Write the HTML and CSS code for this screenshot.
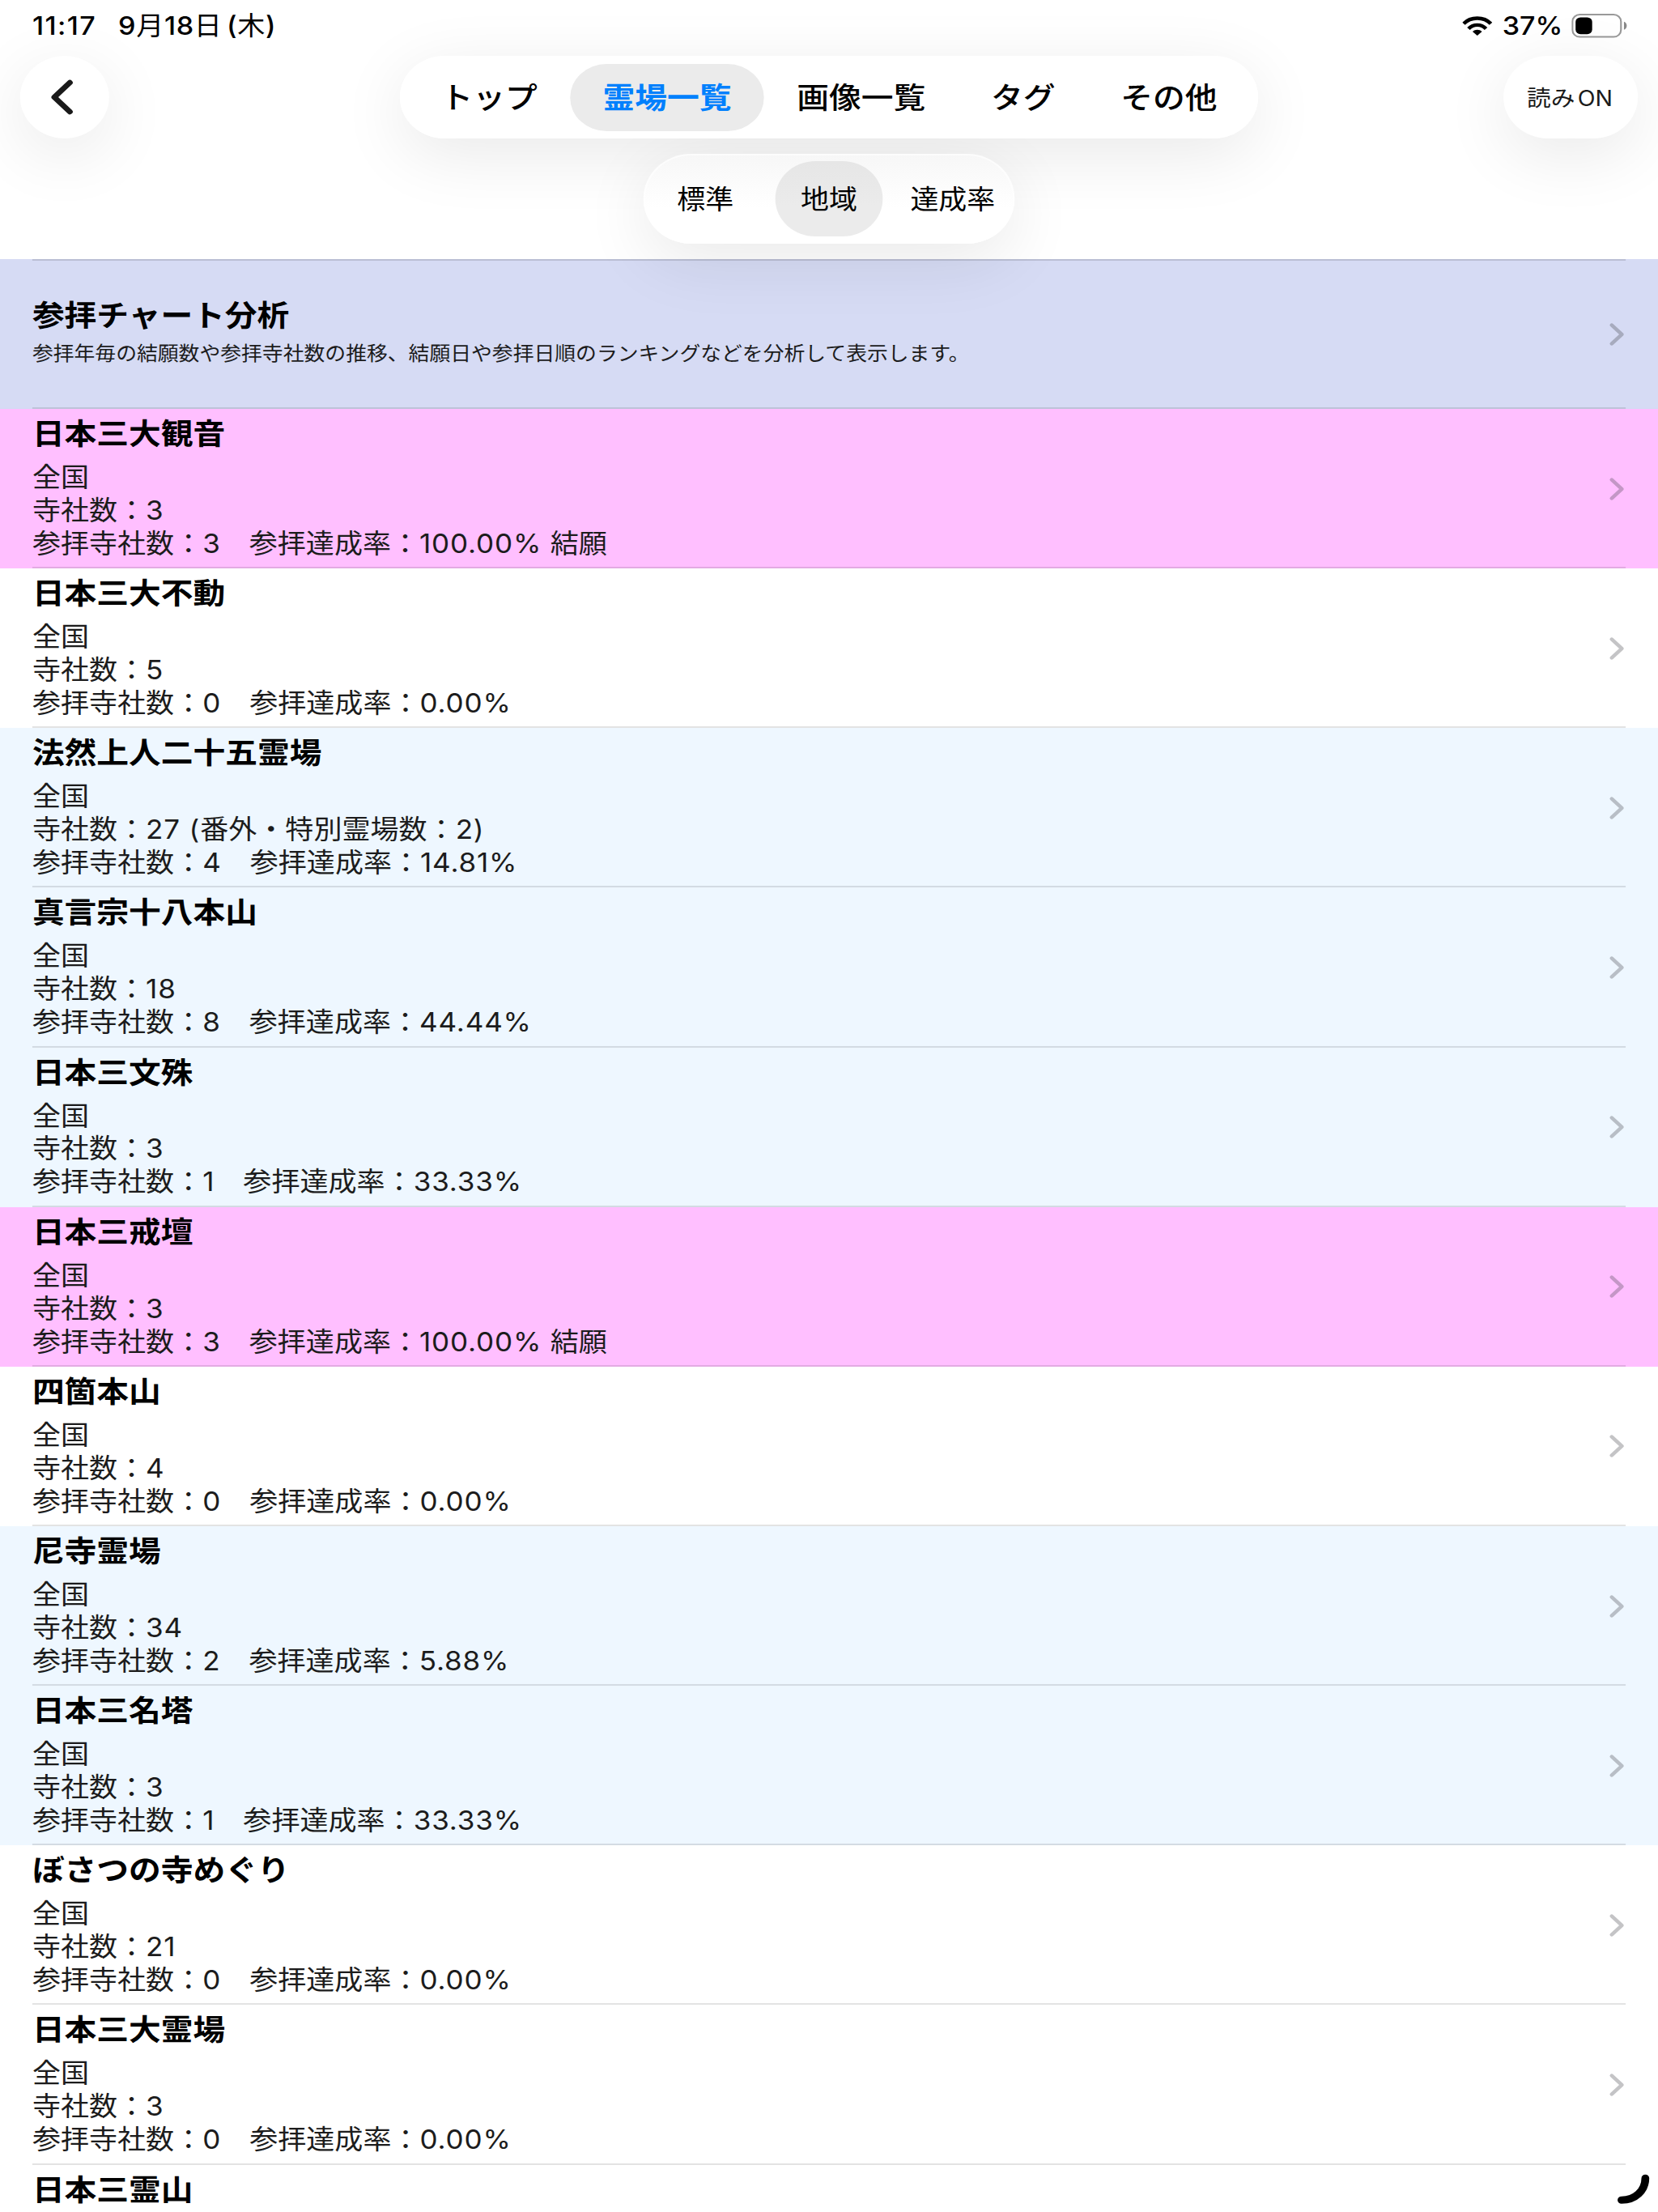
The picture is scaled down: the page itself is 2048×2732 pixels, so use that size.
FILE: index.html
```html
<!DOCTYPE html>
<html lang="ja">
<head>
<meta charset="utf-8">
<title>霊場一覧</title>
<link rel="stylesheet" href="styles.css">
</head>
<body>
<svg class="defs" width="0" height="0" aria-hidden="true">
  <symbol id="chevron" viewBox="0 0 18 30"><path d="M3 3.5 L14.6 15 L3 26.5" fill="none" stroke="currentColor" stroke-width="4.4" stroke-linecap="round" stroke-linejoin="round"/></symbol>
</svg>
<div class="screen">
  <header class="header">
    <div class="status">
      <div class="status-left"><span class="time">11:17</span><span class="date">9<span class="kanji">月</span>18<span class="kanji">日</span><span class="weekday">(<span class="kanji">木</span>)</span></span></div>
      <div class="status-right">
        <svg class="wifi" viewBox="0 0 34 24" width="34" height="24"><g fill="none" stroke="#000" stroke-width="4.4"><path d="M1.4 9.2 C9.5 .2 24.5 .2 32.6 9.2"/><path d="M7 15.4 C12.5 9.4 21.5 9.4 27 15.4"/></g><path d="M11.6 19 C14.6 16 19.4 16 22.4 19 L17 24 Z"/></svg>
        <span class="percent">37%</span>
        <svg class="battery" viewBox="0 0 64 30" width="64" height="30"><rect x="1" y="1" width="55.6" height="27.6" rx="8.5" fill="none" stroke="#999" stroke-width="2"/><rect x="4.6" y="4.4" width="19" height="20.8" rx="5.6"/><path d="M60 9.8 C64.3 11.4 64.3 18.2 60 19.8 Z" fill="#888"/></svg>
      </div>
    </div>
    <div class="toolbar">
      <button class="round-button back" aria-label="戻る"><svg viewBox="0 0 26 44" width="26" height="44"><path d="M22 4 L4.2 22 L22 40" fill="none" stroke="#1a1a1a" stroke-width="6.6" stroke-linecap="round" stroke-linejoin="round"/></svg></button>
      <nav class="tabs">
        <div class="tabs-face">
          <a class="tab">トップ</a><a class="tab active">霊場一覧</a><a class="tab">画像一覧</a><a class="tab">タグ</a><a class="tab">その他</a>
        </div>
      </nav>
      <button class="round-button reading">読み<span class="latin">ON</span></button>
    </div>
    <div class="segment">
      <span class="choice">標準</span><span class="choice selected">地域</span><span class="choice">達成率</span>
    </div>
  </header>
  <main class="list">
    <section class="row chart">
      <div class="text"><h2>参拝チャート分析</h2><p>参拝年毎の結願数や参拝寺社数の推移、結願日や参拝日順のランキングなどを分析して表示します。</p></div>
      <svg class="chevron"><use href="#chevron"/></svg>
    </section>
    <section class="row done">
      <div class="text"><h2>日本三大観音</h2><p>全国</p><p>寺社数：<span class="num">3</span></p><p>参拝寺社数：<span class="num">3</span>　参拝達成率：<span class="num">100.00% </span>結願</p></div>
      <svg class="chevron"><use href="#chevron"/></svg>
    </section>
    <section class="row">
      <div class="text"><h2>日本三大不動</h2><p>全国</p><p>寺社数：<span class="num">5</span></p><p>参拝寺社数：<span class="num">0</span>　参拝達成率：<span class="num">0.00%</span></p></div>
      <svg class="chevron"><use href="#chevron"/></svg>
    </section>
    <section class="row partial">
      <div class="text"><h2>法然上人二十五霊場</h2><p>全国</p><p>寺社数：<span class="num">27 (</span>番外・特別霊場数：<span class="num">2)</span></p><p>参拝寺社数：<span class="num">4</span>　参拝達成率：<span class="num">14.81%</span></p></div>
      <svg class="chevron"><use href="#chevron"/></svg>
    </section>
    <section class="row partial">
      <div class="text"><h2>真言宗十八本山</h2><p>全国</p><p>寺社数：<span class="num">18</span></p><p>参拝寺社数：<span class="num">8</span>　参拝達成率：<span class="num">44.44%</span></p></div>
      <svg class="chevron"><use href="#chevron"/></svg>
    </section>
    <section class="row partial">
      <div class="text"><h2>日本三文殊</h2><p>全国</p><p>寺社数：<span class="num">3</span></p><p>参拝寺社数：<span class="num">1</span>　参拝達成率：<span class="num">33.33%</span></p></div>
      <svg class="chevron"><use href="#chevron"/></svg>
    </section>
    <section class="row done">
      <div class="text"><h2>日本三戒壇</h2><p>全国</p><p>寺社数：<span class="num">3</span></p><p>参拝寺社数：<span class="num">3</span>　参拝達成率：<span class="num">100.00% </span>結願</p></div>
      <svg class="chevron"><use href="#chevron"/></svg>
    </section>
    <section class="row">
      <div class="text"><h2>四箇本山</h2><p>全国</p><p>寺社数：<span class="num">4</span></p><p>参拝寺社数：<span class="num">0</span>　参拝達成率：<span class="num">0.00%</span></p></div>
      <svg class="chevron"><use href="#chevron"/></svg>
    </section>
    <section class="row partial">
      <div class="text"><h2>尼寺霊場</h2><p>全国</p><p>寺社数：<span class="num">34</span></p><p>参拝寺社数：<span class="num">2</span>　参拝達成率：<span class="num">5.88%</span></p></div>
      <svg class="chevron"><use href="#chevron"/></svg>
    </section>
    <section class="row partial">
      <div class="text"><h2>日本三名塔</h2><p>全国</p><p>寺社数：<span class="num">3</span></p><p>参拝寺社数：<span class="num">1</span>　参拝達成率：<span class="num">33.33%</span></p></div>
      <svg class="chevron"><use href="#chevron"/></svg>
    </section>
    <section class="row">
      <div class="text"><h2>ぼさつの寺めぐり</h2><p>全国</p><p>寺社数：<span class="num">21</span></p><p>参拝寺社数：<span class="num">0</span>　参拝達成率：<span class="num">0.00%</span></p></div>
      <svg class="chevron"><use href="#chevron"/></svg>
    </section>
    <section class="row">
      <div class="text"><h2>日本三大霊場</h2><p>全国</p><p>寺社数：<span class="num">3</span></p><p>参拝寺社数：<span class="num">0</span>　参拝達成率：<span class="num">0.00%</span></p></div>
      <svg class="chevron"><use href="#chevron"/></svg>
    </section>
    <section class="row">
      <div class="text"><h2>日本三霊山</h2></div>
    </section>
  </main>
  <svg class="corner" viewBox="0 0 38 38" width="38" height="38"><path d="M32.5 5.3 C32.5 20.5 21 32.3 5.2 32.3" fill="none" stroke="#000" stroke-width="9" stroke-linecap="round"/></svg>
</div>
</body>
</html>
```
FILE: styles.css
```css
* { box-sizing: border-box; margin: 0; padding: 0; }

body {
  width: 2048px;
  height: 2732px;
  overflow: hidden;
  background: #fff;
}

.defs { display: block; }

/* The tablet's canvas is a little narrower than the window and is widened to fill it. */
.screen {
  position: relative;
  width: 1899px;
  height: 2732px;
  overflow: hidden;
  transform: scaleX(1.07846);
  transform-origin: 0 0;
  background: #fff;
  color: #000;
  font-family: Inter, "Noto Sans CJK JP", sans-serif;
}

.header {
  position: relative;
  z-index: 1;
  height: 320px;
}

.status {
  display: flex;
  justify-content: space-between;
  height: 69px;
  padding: 0 35px 0 37px;
  font-size: 31.6px;
  font-weight: 500;
  line-height: 64px;
}

.status-left, .status-right { display: flex; height: 64px; align-items: center; }
.time { letter-spacing: 1.3px; }
.date { margin-left: 25px; letter-spacing: .6px; }
.kanji { font-weight: 400; }
.weekday { margin-left: 5px; }
.percent { margin: 0 10px 0 12px; }

.toolbar {
  display: flex;
  justify-content: space-between;
  height: 102px;
  padding: 0 23px;
}

.round-button {
  display: flex;
  align-items: center;
  justify-content: center;
  border: 0;
  border-radius: 51px;
  background: #fff;
  box-shadow: 0 19px 80px rgba(0, 0, 0, .09);
  color: #1a1a1a;
  font: 400 27.6px/42px Inter, "Noto Sans CJK JP", sans-serif;
}

.back { width: 102px; padding-right: 7px; }
.reading { width: 154px; padding: 1px 2px 0 0; }
.latin { margin-left: 3px; font-size: 26.4px; }

.tabs {
  position: relative;
  margin-left: 52px;
}

.tabs::before {
  content: "";
  position: absolute;
  inset: 0;
  border-radius: 51px;
  box-shadow: 0 19px 80px rgba(0, 0, 0, .09);
}

.tabs-face {
  position: relative;
  z-index: 2;
  display: flex;
  height: 102px;
  padding: 9.5px 9px;
  border-radius: 51px;
  background: #fff;
}

.tab {
  padding: 0 37.4px;
  border-radius: 42px;
  font-size: 36.9px;
  font-weight: 500;
  line-height: 84px;
  height: 83px;
  white-space: nowrap;
}

.tab.active {
  background: #ebebeb;
  color: #0080fd;
  font-weight: 700;
}

.segment {
  position: relative;
  z-index: 1;
  display: grid;
  grid-template-columns: repeat(3, 1fr);
  width: 425px;
  height: 111px;
  margin: 19px auto 0;
  padding: 9px 0;
  border-radius: 55px;
  background: linear-gradient(#f7f7f7, #fff 60%);
  box-shadow: 0 19px 80px rgba(0, 0, 0, .09), inset 0 0 0 2px rgba(255, 255, 255, .6);
}

.choice {
  height: 93px;
  margin: 0 9px;
  border-radius: 46px;
  font-size: 32.4px;
  line-height: 96px;
  text-align: center;
  white-space: nowrap;
}

.choice.selected { background: linear-gradient(#e6e6e6, #ebebeb 60%); }

.row {
  position: relative;
  display: flex;
  align-items: center;
  justify-content: space-between;
  height: 197.15px;
  padding: 0 38px 0 37px;
}

.row::after {
  content: "";
  position: absolute;
  right: 37px;
  bottom: 0;
  left: 37px;
  height: 2px;
  background: rgba(0, 0, 0, .11);
}

.text { align-self: flex-start; padding-top: 9px; }

h2 {
  margin-bottom: 12px;
  font-size: 36.85px;
  font-weight: 600;
  line-height: 44px;
}

p {
  color: #1c1c1c;
  font-size: 32.5px;
  font-weight: 400;
  line-height: 40.9px;
  white-space: nowrap;
}

.num { letter-spacing: .75px; }

.chevron {
  width: 18px;
  height: 30px;
  color: rgba(60, 60, 67, .3);
}

.chart {
  height: 185px;
  background: #d6dbf4;
  box-shadow: inset 0 -1px 0 #d2dcf2;
}

.chart::before {
  content: "";
  position: absolute;
  top: 0;
  right: 37px;
  left: 37px;
  height: 2px;
  background: rgba(0, 0, 0, .13);
}

.chart .text { padding-top: 48px; }
.chart h2 { margin-bottom: 5px; }
.chart p { font-size: 23.94px; }

.done { background: #ffbfff; }
.partial { background: #eef7ff; }

.corner {
  position: absolute;
  top: 2685px;
  left: 1852px;
}
```
